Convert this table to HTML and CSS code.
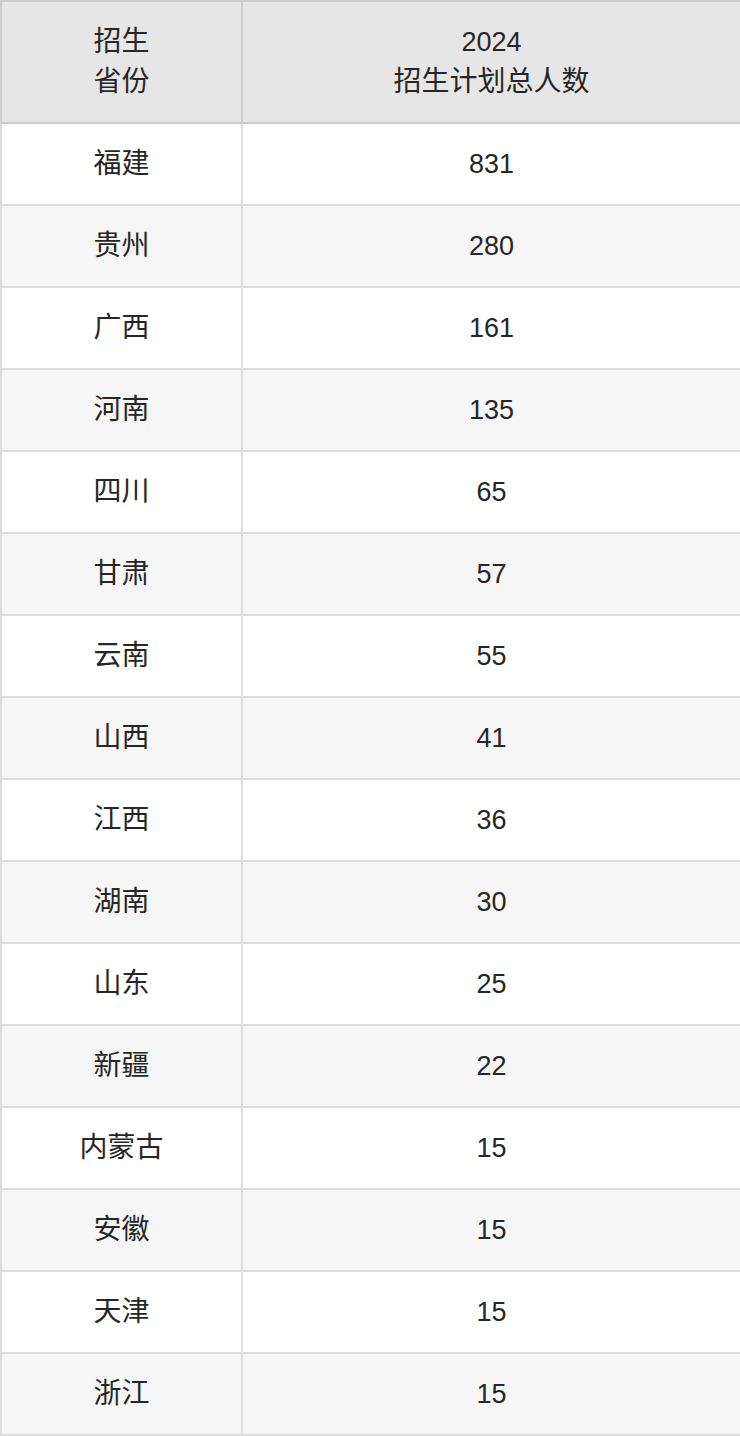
FILE: index.html
```html
<!DOCTYPE html>
<html lang="zh">
<head>
<meta charset="utf-8">
<title>招生计划</title>
<link rel="stylesheet" href="styles.css">
</head>
<body>
<table class="plan">
  <colgroup><col class="c1"><col class="c2"></colgroup>
  <thead>
    <tr><th>招生<br>省份</th><th><span class="num">2024</span><br>招生计划总人数</th></tr>
  </thead>
  <tbody>
    <tr><td>福建</td><td class="num">831</td></tr>
    <tr><td>贵州</td><td class="num">280</td></tr>
    <tr><td>广西</td><td class="num">161</td></tr>
    <tr><td>河南</td><td class="num">135</td></tr>
    <tr><td>四川</td><td class="num">65</td></tr>
    <tr><td>甘肃</td><td class="num">57</td></tr>
    <tr><td>云南</td><td class="num">55</td></tr>
    <tr><td>山西</td><td class="num">41</td></tr>
    <tr><td>江西</td><td class="num">36</td></tr>
    <tr><td>湖南</td><td class="num">30</td></tr>
    <tr><td>山东</td><td class="num">25</td></tr>
    <tr><td>新疆</td><td class="num">22</td></tr>
    <tr><td>内蒙古</td><td class="num">15</td></tr>
    <tr><td>安徽</td><td class="num">15</td></tr>
    <tr><td>天津</td><td class="num">15</td></tr>
    <tr><td>浙江</td><td class="num">15</td></tr>
  </tbody>
</table>
</body>
</html>
```
FILE: styles.css
```css
html, body {
  margin: 0;
  padding: 0;
  background: #ffffff;
}
.plan {
  width: 740px;
  border-collapse: collapse;
  table-layout: fixed;
  font-family: "Liberation Sans", "Noto Sans CJK SC", sans-serif;
  font-size: 28px;
  color: #262626;
}
.plan .c1 { width: 241px; }
.plan .c2 { width: 499px; }
.plan th {
  background: #e6e6e6;
  border: 2px solid #cccccc;
  height: 120px;
  padding: 0;
  font-weight: normal;
  line-height: 40px;
  text-align: center;
  vertical-align: middle;
}
.plan td {
  border: 2px solid #dddddd;
  height: 80px;
  padding: 0;
  text-align: center;
  vertical-align: middle;
  line-height: 40px;
}
.plan tbody tr:nth-child(even) td {
  background: #f6f6f6;
}
.plan .num {
  font-size: 27px;
}
```
